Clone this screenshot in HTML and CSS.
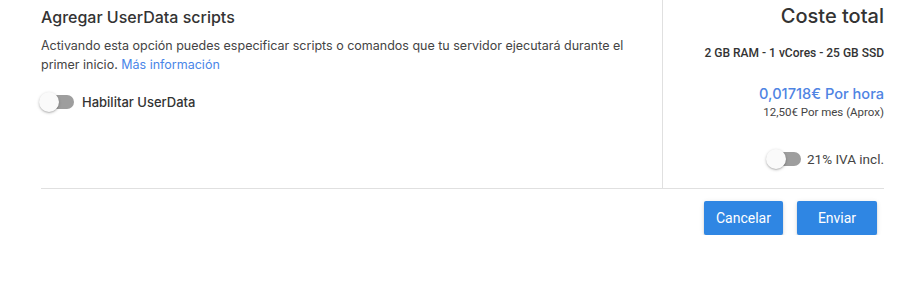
FILE: index.html
```html
<!DOCTYPE html>
<html lang="es">
<head>
<meta charset="utf-8">
<link rel="stylesheet" href="styles.css">
</head>
<body>
<div class="wrap">
  <div class="row">
    <div class="left">
      <h2 class="title">Agregar UserData scripts</h2>
      <p class="desc">Activando esta opción puedes especificar scripts o comandos que tu servidor ejecutará durante el primer inicio. <a class="link" href="#">Más información</a></p>
      <div class="switch-row">
        <span class="switch"><span class="track"></span><span class="thumb"></span></span>
        <span class="switch-label">Habilitar UserData</span>
      </div>
    </div>
    <div class="right">
      <div class="cost-title">Coste total</div>
      <div class="specs">2 GB RAM - 1 vCores - 25 GB SSD</div>
      <div class="price">0,01718€ Por hora</div>
      <div class="month">12,50€ Por mes (Aprox)</div>
      <div class="iva-row">
        <span class="switch"><span class="track"></span><span class="thumb"></span></span>
        <span class="iva-label">21% IVA incl.</span>
      </div>
    </div>
  </div>
  <div class="actions">
    <button class="btn">Cancelar</button>
    <button class="btn btn-wide">Enviar</button>
  </div>
</div>
</body>
</html>
```
FILE: styles.css
```css
html, body {
  margin: 0;
  padding: 0;
  background: #fff;
}
.wrap {
  width: 843px;
  margin-left: 41px;
  font-family: Inter, "Noto Sans", sans-serif;
  color: #333;
}
.row {
  display: flex;
  height: 188px;
  border-bottom: 1px solid #e0e0e0;
}
.left {
  flex: 1;
  border-right: 1px solid #e0e0e0;
  padding-right: 30px;
}
.title {
  margin: 5px 0 0;
  font-size: 16px;
  font-weight: 500;
  line-height: 24px;
  color: #333;
}
.desc {
  margin: 8px 0 0;
  font-size: 12.5px;
  line-height: 18.5px;
  color: #444;
}
.link {
  color: #4a86e8;
  text-decoration: none;
}
.switch-row {
  display: flex;
  align-items: center;
  margin-top: 18px;
  gap: 8px;
}
.switch {
  position: relative;
  display: inline-block;
  width: 33px;
  height: 20px;
}
.track {
  position: absolute;
  left: 0;
  right: 0;
  top: 3px;
  height: 14px;
  border-radius: 7px;
  background: #9e9e9e;
}
.thumb {
  position: absolute;
  left: -2px;
  top: 0;
  width: 20px;
  height: 20px;
  border-radius: 50%;
  background: #fafafa;
  box-shadow: 0 1px 3px rgba(0,0,0,.25), 0 1px 1px rgba(0,0,0,.1);
}
.switch-label {
  font-size: 13px;
  font-weight: 500;
  color: #333;
}
.right {
  width: 221px;
  text-align: right;
  display: flex;
  flex-direction: column;
  align-items: flex-end;
}
.cost-title {
  margin-top: 3px;
  font-size: 20px;
  font-weight: 500;
  line-height: 26px;
  color: #333;
}
.specs {
  margin-top: 16px;
  font-family: Roboto, sans-serif;
  font-size: 12px;
  font-weight: 500;
  line-height: 16px;
  color: #333;
}
.price {
  margin-top: 24px;
  font-size: 14.6px;
  font-weight: 500;
  line-height: 18px;
  color: #4f84e3;
}
.month {
  margin-top: 2px;
  font-family: Roboto, sans-serif;
  font-size: 11.5px;
  line-height: 14px;
  color: #444;
}
.iva-row {
  display: flex;
  align-items: center;
  gap: 6px;
  margin-top: 30px;
}
.iva-label {
  font-family: Roboto, sans-serif;
  font-size: 13.5px;
  color: #444;
}
.actions {
  display: flex;
  justify-content: flex-end;
  gap: 14px;
  margin-top: 12px;
  padding-right: 7px;
}
.btn {
  font-family: Roboto, sans-serif;
  font-size: 14px;
  color: #fff;
  background: #2f86e3;
  border: 0;
  border-radius: 2px;
  height: 34px;
  padding: 0;
  width: 79px;
  box-shadow: 0 3px 1px -2px rgba(0,0,0,.2), 0 2px 2px 0 rgba(0,0,0,.14), 0 1px 5px 0 rgba(0,0,0,.12);
}
.btn-wide {
  width: 80px;
}
```
